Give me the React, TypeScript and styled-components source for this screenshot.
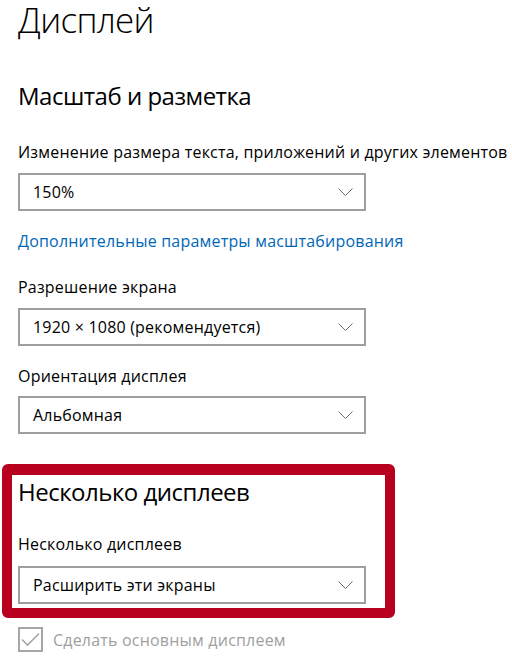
import React from "react";
import styled, { createGlobalStyle } from "styled-components";

const Global = createGlobalStyle`
  html, body { margin: 0; padding: 0; background: #ffffff; }
  body { font-family: "Open Sans", "Noto Sans", sans-serif; color: #000; }
`;

const Page = styled.div`
  padding: 0 0 0 18px;
  width: 512px;
  height: 662px;
  box-sizing: border-box;
  overflow: hidden;
`;

const Title = styled.h1`
  margin: 0;
  font-size: 35px;
  line-height: 40px;
  font-weight: 300;
  letter-spacing: -0.7px;
`;

const SectionTitle = styled.h2<{ $mt: number }>`
  margin: ${(p) => p.$mt}px 0 0 0;
  font-size: 24px;
  line-height: 32px;
  font-weight: 400;
  letter-spacing: -0.5px;
`;

const Label = styled.div<{ $mt: number }>`
  margin-top: ${(p) => p.$mt}px;
  font-size: 16px;
  line-height: 20px;
  letter-spacing: 0.2px;
  white-space: nowrap;
`;

const Link = styled.a`
  display: block;
  margin-top: 20px;
  font-size: 16px;
  line-height: 20px;
  letter-spacing: 0.2px;
  color: #0067b8;
  text-decoration: none;
  white-space: nowrap;
`;

const Select = styled.div<{ $mt: number }>`
  margin-top: ${(p) => p.$mt}px;
  width: 348px;
  height: 38px;
  box-sizing: border-box;
  border: 2px solid #9e9e9e;
  padding: 0 11px 0 13px;
  display: flex;
  align-items: center;
  justify-content: space-between;
  font-size: 16px;
  letter-spacing: 0.2px;
  background: #fff;
`;

const Highlight = styled.section`
  margin: 30px 0 0 -16px;
  width: 393px;
  box-sizing: border-box;
  border: 10px solid #b8001f;
  border-top-width: 11px;
  border-radius: 6px;
  padding: 0 0 4px 6px;
`;

const CheckRow = styled.label`
  margin-top: 9px;
  display: flex;
  align-items: center;
  gap: 10px;
  font-size: 16px;
  letter-spacing: 0.2px;
  color: #a0a0a0;
`;

const Box = styled.span`
  width: 25px;
  height: 25px;
  box-sizing: border-box;
  border: 2px solid #a6a6a6;
  display: flex;
  align-items: center;
  justify-content: center;
`;

const Chevron = () => (
  <svg width="15" height="8" viewBox="0 0 15 8" fill="none">
    <polyline points="0.5,0.5 7.5,7.5 14.5,0.5" stroke="#6e6e6e" strokeWidth="1" />
  </svg>
);

const Dropdown: React.FC<{ value: string; mt: number }> = ({ value, mt }) => (
  <Select $mt={mt}>
    <span>{value}</span>
    <Chevron />
  </Select>
);

export default function App() {
  return (
    <>
      <Global />
      <Page>
        <Title>Дисплей</Title>
        <SectionTitle $mt={40}>Масштаб и разметка</SectionTitle>
        <Label $mt={30}>Изменение размера текста, приложений и других элементов</Label>
        <Dropdown mt={11} value="150%" />
        <Link href="#">Дополнительные параметры масштабирования</Link>
        <Label $mt={26}>Разрешение экрана</Label>
        <Dropdown mt={11} value="1920 × 1080 (рекомендуется)" />
        <Label $mt={20}>Ориентация дисплея</Label>
        <Dropdown mt={10} value="Альбомная" />
        <Highlight>
          <SectionTitle $mt={1}>Несколько дисплеев</SectionTitle>
          <Label $mt={26}>Несколько дисплеев</Label>
          <Dropdown mt={12} value="Расширить эти экраны" />
        </Highlight>
        <CheckRow>
          <Box>
            <svg width="19" height="15" viewBox="0 0 19 15" fill="none">
              <polyline points="1,7.5 6.5,13 18,1.5" stroke="#a6a6a6" strokeWidth="1.6" />
            </svg>
          </Box>
          <span>Сделать основным дисплеем</span>
        </CheckRow>
      </Page>
    </>
  );
}
